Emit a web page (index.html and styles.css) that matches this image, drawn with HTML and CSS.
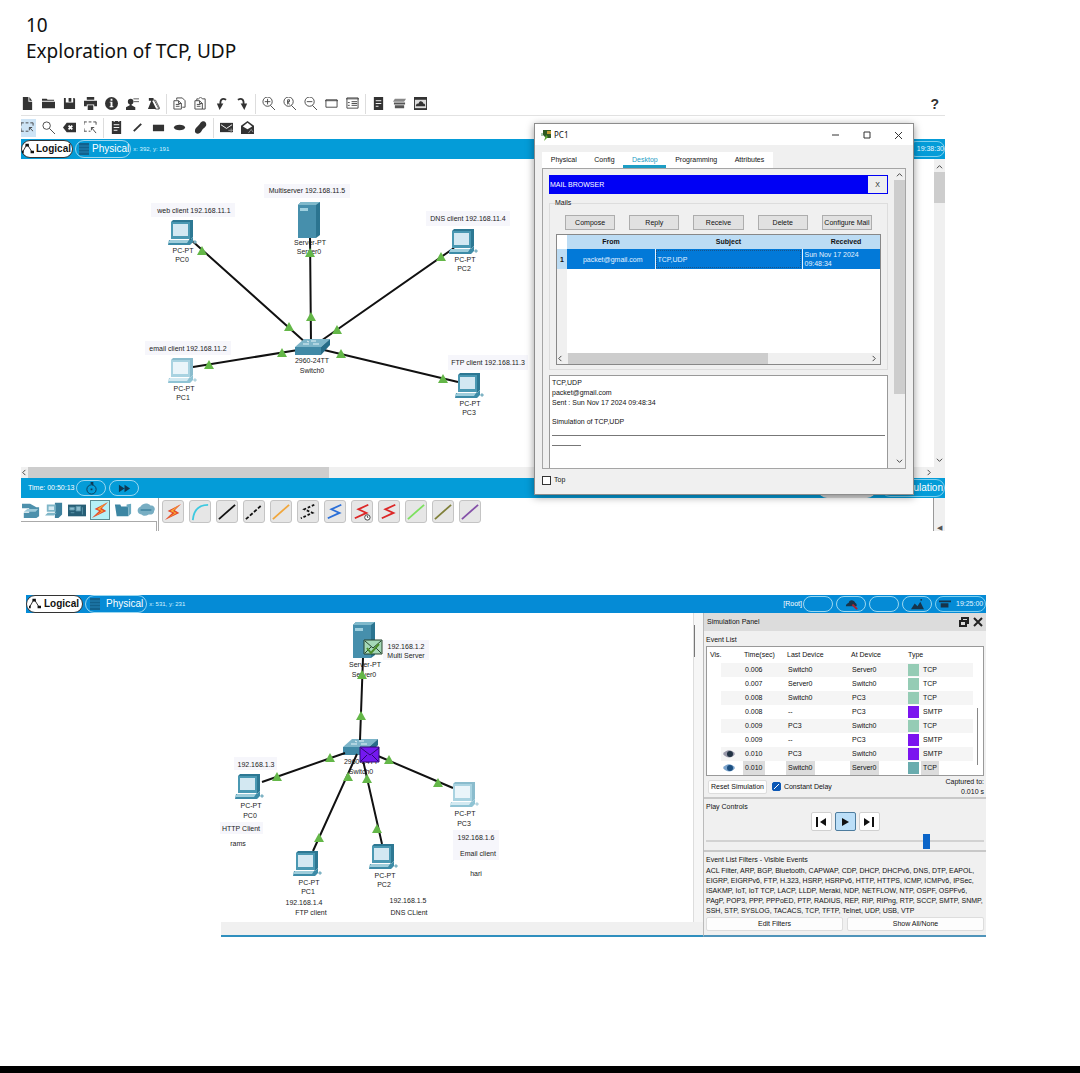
FILE: index.html
```html
<!DOCTYPE html>
<html lang="en">
<head>
<meta charset="utf-8">
<title>Exploration of TCP, UDP</title>
<link rel="stylesheet" href="styles.css">
</head>
<body>
<svg class="defs" width="0" height="0" aria-hidden="true">
  <defs>
    <symbol id="pc" viewBox="0 0 30 26">
      <path d="M3 2 5 0H25V17L22 20Z" fill="#2d7893"/>
      <path d="M3 2H22V19H3Z" fill="#4a98b2"/>
      <path d="M5 4H20V16H5Z" fill="#d3e8f2"/>
      <path d="M1 20H22L25 17V22L22 25H0Z" fill="#3c8ba7"/>
      <path d="M2 20H21L19 23H0Z" fill="#9fcddb"/>
      <path d="M26 23 28 21" stroke="#7fb3c4" stroke-width="3" fill="none"/>
    </symbol>
    <symbol id="pc-lit" viewBox="0 0 30 26">
      <path d="M3 2 5 0H25V17L22 20Z" fill="#8abccd"/>
      <path d="M3 2H22V19H3Z" fill="#a9d3e1"/>
      <path d="M5 4H20V16H5Z" fill="#eaf5fa"/>
      <path d="M1 20H22L25 17V22L22 25H0Z" fill="#8fc3d4"/>
      <path d="M2 20H21L19 23H0Z" fill="#d2e9f1"/>
      <path d="M26 23 28 21" stroke="#b3d3de" stroke-width="3" fill="none"/>
    </symbol>
    <symbol id="server" viewBox="0 0 23 36">
      <path d="M0 3 3 0H22V33L18 36Z" fill="#2b7490"/>
      <path d="M0 3H18V36H0Z" fill="#468fac"/>
      <path d="M0 3 3 0H22L18 3Z" fill="#7fb9cb"/>
      <path d="M2 6H10V9H2Z" fill="#9fd0df"/>
    </symbol>
    <symbol id="switch" viewBox="0 0 35 17">
      <path d="M0 8 9 0H35L26 8Z" fill="#7db5c9"/>
      <path d="M0 8H26V16H0Z" fill="#4089a6"/>
      <path d="M26 8 35 0V6L26 16Z" fill="#276c88"/>
      <path d="M8 5h6M16 2h5M18 5h6M12 2l2 1" stroke="#e4f3f8" stroke-width="1"/>
    </symbol>
    <symbol id="up" viewBox="0 0 10 9"><path d="M5 0 10 9H0Z" fill="#64b748"/></symbol>
    <symbol id="bolt" viewBox="0 0 20 20"><path d="M19 1 4 9l5 2-8 8 16-8-5-3Z" fill="#e5482a"/><path d="M17 2 7 9l5 2-8 6 10-6-4-2Z" fill="#f9b233"/></symbol>
    <symbol id="zig" viewBox="0 0 20 20"><path d="M17 2 6 7l9 4L2 17" fill="none" stroke="currentColor" stroke-width="2"/></symbol>
    <symbol id="slash" viewBox="0 0 20 20"><path d="M1 18 19 2" fill="none" stroke="currentColor" stroke-width="2"/></symbol>
    <symbol id="path" viewBox="0 0 14 14"><path d="M1 10 5 3h2l5 8" fill="none" stroke="currentColor"/><path d="M4 1h4v3H4ZM10 9h4v3h-4ZM0 9h2v3H0Z" fill="currentColor"/></symbol>
    <symbol id="rack" viewBox="0 0 12 12"><path d="M1 0h10v12H1Z" fill="#12618c"/><path d="M1 3h10M1 6h10M1 9h10" stroke="#2483b5"/></symbol>
  </defs>
</svg>

<header class="doc-head">
  <p>10</p>
  <h1>Exploration of TCP, UDP</h1>
</header>

<main>
<section class="app app-first" aria-label="Logical workspace">
  <div class="toolbar">
    <button class="tool" aria-label="New"><svg viewBox="0 0 14 14"><path d="M2 0h6v5h4v9H2ZM9 0l3 4H9Z"/></svg></button>
    <button class="tool" aria-label="Open"><svg viewBox="0 0 14 14"><path d="M0 2h5l1 1h7v1H0ZM0 5h14v7H0Z"/></svg></button>
    <button class="tool" aria-label="Save"><svg viewBox="0 0 14 14"><path d="M1 1h2v5h8V1h1l1 1v11H1ZM6 1h3v4H6Z"/></svg></button>
    <button class="tool" aria-label="Print"><svg viewBox="0 0 14 14"><path d="M3 0h8v3H3ZM0 4h14v6h-3V8H3v2H0ZM4 9h6v5H4Z"/></svg></button>
    <button class="tool" aria-label="Info"><svg viewBox="0 0 14 14"><circle cx="7" cy="7" r="7"/><path d="M6 2h2v2H6ZM5 5h3v5h1v1H5v-1h1V6H5Z" fill="#fff"/></svg></button>
    <button class="tool" aria-label="User"><svg viewBox="0 0 14 14"><circle cx="5" cy="5" r="3"/><path d="M4 7h2v2l4 2v3H0v-3l4-2Z"/><path d="M8 2h6M8 5h6" stroke="#555"/></svg></button>
    <button class="tool" aria-label="Wizard"><svg viewBox="0 0 14 14"><path d="M1 13 5 3l5 10ZM2 1h5v3H2Z"/><path d="M7 2l6 11H9M9 3l5 10" stroke="#555" fill="none"/></svg></button>
    <span class="sep"></span>
    <button class="tool line" aria-label="Copy"><svg viewBox="0 0 14 14"><path d="M4 3V1h6l3 3v7h-3M1 4h5l3 3v6H1ZM3 8h4M3 10h4M6 4v3h3"/></svg></button>
    <button class="tool line" aria-label="Paste"><svg viewBox="0 0 14 14"><path d="M3 4V2h2l2-2 2 2h3v11H9M1 4h5l3 3v6H1ZM3 8h4M3 10h4M6 4v3h3"/></svg></button>
    <button class="tool" aria-label="Undo"><svg viewBox="0 0 14 14"><path d="M2 7h7l-4 7Z"/><path d="M6 9c-1-7 2-8 6-6" fill="none" stroke="#333" stroke-width="2"/></svg></button>
    <button class="tool" aria-label="Redo"><svg viewBox="0 0 14 14"><path d="M5 7h7l-3 7Z"/><path d="M8 9c1-7-2-8-6-6" fill="none" stroke="#333" stroke-width="2"/></svg></button>
    <span class="sep"></span>
    <button class="tool line" aria-label="Zoom in"><svg viewBox="0 0 14 14"><circle cx="6" cy="5" r="5"/><path d="m9 9 5 5M3 5h6M6 2v6"/></svg></button>
    <button class="tool line" aria-label="Zoom reset"><svg viewBox="0 0 14 14"><circle cx="6" cy="5" r="5"/><path d="m9 9 5 5M5 8V3h2v2H5l2 3"/></svg></button>
    <button class="tool line" aria-label="Zoom out"><svg viewBox="0 0 14 14"><circle cx="6" cy="5" r="5"/><path d="m9 9 5 5M3 5h6"/></svg></button>
    <button class="tool line" aria-label="Viewport"><svg viewBox="0 0 14 14"><path d="M1 3h12v8H1ZM0 4h14"/></svg></button>
    <button class="tool line" aria-label="Workspace list"><svg viewBox="0 0 14 14"><path d="M1 1h12v11H1ZM0 2h14M2 6h2M2 9h2M6 5h6M6 7h6M6 9h6"/></svg></button>
    <span class="sep"></span>
    <button class="tool" aria-label="Palette"><svg viewBox="0 0 14 14"><path d="M2 0h10v14H2Z"/><path d="M4 4h6M4 7h6M4 10h3" stroke="#fff"/></svg></button>
    <button class="tool" aria-label="Devices"><svg viewBox="0 0 14 14"><path d="M2 2h12l-2 3H0Z" fill="#888"/><path d="M1 6h12v2H1ZM2 9h10v3H2Z" fill="#555"/></svg></button>
    <button class="tool" aria-label="Cloud"><svg viewBox="0 0 14 14"><path d="M0 0h14v14H0Z"/><path d="M1 3h12v9H1Z" fill="#ddd"/><path d="M2 10c0-3 2-3 3-3 1-4 5-2 5 0 2 0 2 1 2 3Z"/></svg></button>
    <button class="help" aria-label="Help">?</button>
  </div>
  <div class="toolbar toolbar-second">
    <button class="tool line picked" aria-label="Select"><svg viewBox="0 0 14 14"><path d="M0 5V2h3M5 2h3M10 2h3v3M0 8v3h3M5 11h3M9 7l4 4M9 10V7h3"/></svg></button>
    <button class="tool line" aria-label="Inspect"><svg viewBox="0 0 14 14"><circle cx="5" cy="5" r="4"/><path d="m8 8 6 6"/></svg></button>
    <button class="tool" aria-label="Delete"><svg viewBox="0 0 14 14"><path d="M0 7 4 2h10v10H4Z"/><path d="m6 5 4 4M10 5 6 9" stroke="#fff" stroke-width="2"/></svg></button>
    <button class="tool line" aria-label="Resize"><svg viewBox="0 0 14 14"><path d="M0 4V1h3M5 1h3M10 1h3v3M0 8v3h3M5 11h2M8 7l5 6M8 10V7h3"/></svg></button>
    <span class="sep"></span>
    <button class="tool" aria-label="Note"><svg viewBox="0 0 14 14"><path d="M2 0h2v1h1V0h4v1h1V0h2v14H2Z"/><path d="M4 4h6M4 7h6M4 10h4" stroke="#fff"/></svg></button>
    <button class="tool" aria-label="Line"><svg viewBox="0 0 14 14"><path d="M3 11 11 3" stroke="#333" stroke-width="2"/></svg></button>
    <button class="tool" aria-label="Rectangle"><svg viewBox="0 0 14 14"><path d="M1 4h12v7H1Z"/></svg></button>
    <button class="tool" aria-label="Ellipse"><svg viewBox="0 0 14 14"><ellipse cx="7" cy="7" rx="6" ry="3"/></svg></button>
    <button class="tool" aria-label="Freeform"><svg viewBox="0 0 14 14"><path d="M7 2c4-4 7 0 6 3-2 3-4 3-5 6-2 4-7 3-7 0 0-4 4-5 6-9Z"/></svg></button>
    <span class="sep"></span>
    <button class="tool" aria-label="Simple PDU"><svg viewBox="0 0 14 14"><path d="M0 2h14v10H0Z"/><path d="m1 4 6 4 6-4" stroke="#fff" fill="none"/><path d="M9 10h5M12 8v5" stroke="#999"/></svg></button>
    <button class="tool" aria-label="Complex PDU"><svg viewBox="0 0 14 14"><path d="m0 5 7-5 7 5v9H0Z"/><path d="m2 6 5-4 5 4-5 3Z" fill="#fff"/><path d="m8 13 3-4 2 3" stroke="#999" fill="none"/></svg></button>
  </div>

  <div class="bluebar">
    <button class="view-tab active"><svg viewBox="0 0 14 14"><use href="#path"/></svg>Logical</button>
    <button class="view-tab"><svg viewBox="0 0 12 12"><use href="#rack"/></svg>Physical</button>
    <span class="coords">x: 392, y: 191</span>
    <span class="clock">19:38:30</span>
  </div>

  <div class="workspace">
    <svg class="diagram" width="510" height="308" viewBox="21 159 510 308" role="img" aria-label="Star topology around Switch0">
      <g class="tag"><rect x="151" y="203" width="84" height="14"/><rect x="264" y="184" width="86" height="14"/><rect x="426" y="211" width="84" height="15"/><rect x="145" y="341" width="86" height="14"/><rect x="448" y="355" width="80" height="15"/></g>
      <g class="names">
        <text x="194" y="213">web client 192.168.11.1</text>
        <text x="307" y="193">Multiserver 192.168.11.5</text>
        <text x="468" y="221">DNS client 192.168.11.4</text>
        <text x="188" y="351">email client 192.168.11.2</text>
        <text x="488" y="365">FTP client 192.168.11.3</text>
        <text x="183" y="253">PC-PT</text><text x="182" y="262">PC0</text>
        <text x="310" y="245">Server-PT</text><text x="309" y="254">Server0</text>
        <text x="465" y="262">PC-PT</text><text x="464" y="271">PC2</text>
        <text x="184" y="391">PC-PT</text><text x="183" y="400">PC1</text>
        <text x="312" y="363">2960-24TT</text><text x="312" y="373">Switch0</text>
        <text x="470" y="406">PC-PT</text><text x="469" y="415">PC3</text>
      </g>
      <g class="cable"><path d="M190 239 306 343M310 236 311 343M454 248 318 343M193 367 298 350M458 382 324 350"/></g>
      <use href="#pc" x="168" y="220" width="30" height="26"/>
      <use href="#server" x="298" y="202" width="23" height="36"/>
      <use href="#pc" x="449" y="229" width="30" height="26"/>
      <use href="#pc-lit" x="168" y="358" width="30" height="26"/>
      <use href="#pc" x="455" y="373" width="30" height="26"/>
      <use href="#switch" x="295" y="339" width="35" height="17"/>
      <g>
        <use href="#up" x="197" y="246" width="10" height="9"/><use href="#up" x="284" y="322" width="10" height="9"/>
        <use href="#up" x="305" y="248" width="10" height="9"/><use href="#up" x="306" y="312" width="10" height="9"/>
        <use href="#up" x="436" y="252" width="10" height="9"/><use href="#up" x="332" y="325" width="10" height="9"/>
        <use href="#up" x="204" y="360" width="10" height="9"/><use href="#up" x="277" y="348" width="10" height="9"/>
        <use href="#up" x="336" y="349" width="10" height="9"/><use href="#up" x="438" y="374" width="10" height="9"/>
      </g>
    </svg>
    <div class="vscroll"><svg viewBox="0 0 8 8"><path d="m1 6 3-3 3 3"/></svg><span class="thumb"></span><svg class="end" viewBox="0 0 8 8"><path d="m1 2 3 3 3-3"/></svg></div>
  </div>
  <div class="hscroll"><svg viewBox="0 0 8 8"><path d="M5 1 2 4l3 3"/></svg><span class="thumb"></span><svg class="end" viewBox="0 0 8 8"><path d="m3 1 3 3-3 3"/></svg></div>

  <div class="bluebar timebar">
    <span>Time: 00:50:13</span>
    <button class="pill" aria-label="Power cycle"><svg viewBox="0 0 14 14"><circle cx="7" cy="8" r="5" fill="none" stroke="#0d3a55"/><path d="M6 0h3v4L6 2ZM6 7h2v2H6Z" fill="#0d3a55"/></svg></button>
    <button class="pill" aria-label="Fast forward"><svg viewBox="0 0 14 14"><path d="m1 3 6 4-6 4ZM7 3l6 4-6 4Z" fill="#0d3a55"/></svg></button>
    <button class="mode-real" aria-label="Realtime"></button>
    <button class="mode-sim">Simulation</button>
  </div>

  <div class="palette">
    <div class="groups">
      <div class="group-row">
        <button class="group" aria-label="Network devices"><svg viewBox="0 0 20 20"><path d="M0 3h9l7 4h3v10l-3 2H2v-6h6V8H0Z" fill="#4d90ac"/><path d="M2 12 6 9h12l-3 3Z" fill="#9cc9d9"/></svg></button>
        <button class="group" aria-label="End devices"><svg viewBox="0 0 20 20"><path d="M11 2h8v13l-4 4h-4Z" fill="#3d809d"/><path d="M2 4h10v8H2ZM0 16l3-3h10l-3 3Z" fill="#7fb6c8"/><path d="M4 6h6v4H4Z" fill="#d6eaf2"/></svg></button>
        <button class="group" aria-label="Components"><svg viewBox="0 0 20 20"><path d="M0 4h20v13H0Z" fill="#285f76"/><path d="M2 7h5v3H2ZM9 6h5v5H9ZM3 13h4M16 7v8" fill="#8dbccd" stroke="#5f98ad"/></svg></button>
        <button class="group chosen" aria-label="Connections"><svg viewBox="0 0 20 20"><use href="#bolt"/></svg></button>
        <button class="group" aria-label="Miscellaneous"><svg viewBox="0 0 20 20"><path d="M1 4h6l1 2h8v11H3Z" fill="#3d86a3"/><path d="m14 4 5-1v11l-3 3V7h-2Z" fill="#69a9c0"/></svg></button>
        <button class="group" aria-label="Multiuser"><svg viewBox="0 0 20 20"><path d="M4 6c3-4 8-4 11-1 4-1 6 4 4 6 0 4-4 4-6 4-3 2-6 2-8 0-5 0-6-7-1-9Z" fill="#78aec3"/><path d="M4 10h12" stroke="#4a8ba5" stroke-width="2"/></svg></button>
      </div>
      <div class="subgroup"></div>
    </div>
    <div class="links">
      <button class="link" aria-label="Automatic"><svg viewBox="0 0 20 20"><use href="#bolt"/></svg></button>
      <button class="link cyan" aria-label="Console"><svg viewBox="0 0 20 20"><path d="M2 19C3 8 8 2 19 2" fill="none" stroke="currentColor" stroke-width="2"/></svg></button>
      <button class="link black" aria-label="Straight-through"><svg viewBox="0 0 20 20"><use href="#slash"/></svg></button>
      <button class="link black" aria-label="Cross-over"><svg viewBox="0 0 20 20"><path d="M1 18 19 2" stroke="currentColor" stroke-width="2" stroke-dasharray="4 2"/></svg></button>
      <button class="link orange" aria-label="Fiber"><svg viewBox="0 0 20 20"><use href="#slash"/></svg></button>
      <button class="link black" aria-label="Phone"><svg viewBox="0 0 20 20"><path d="M17 2 6 7l9 4L2 17" fill="none" stroke="currentColor" stroke-width="2" stroke-dasharray="3 2"/></svg></button>
      <button class="link blue" aria-label="Coaxial"><svg viewBox="0 0 20 20"><use href="#zig"/></svg></button>
      <button class="link red" aria-label="Serial DCE"><svg viewBox="0 0 20 20"><use href="#zig"/><circle cx="16" cy="16" r="3" fill="#fff" stroke="#333"/><path d="M16 14v2h1" stroke="#333" fill="none"/></svg></button>
      <button class="link red" aria-label="Serial DTE"><svg viewBox="0 0 20 20"><use href="#zig"/></svg></button>
      <button class="link green" aria-label="Octal"><svg viewBox="0 0 20 20"><use href="#slash"/></svg></button>
      <button class="link olive" aria-label="Custom"><svg viewBox="0 0 20 20"><use href="#slash"/></svg></button>
      <button class="link violet" aria-label="USB"><svg viewBox="0 0 20 20"><use href="#slash"/></svg></button>
    </div>
    <div class="collapse">◀</div>
  </div>

  <div class="window" role="dialog" aria-labelledby="win-title">
    <div class="titlebar">
      <svg width="11" height="12" viewBox="0 0 11 12"><path d="M2 1h8v8H5l-3-3Z" fill="#2d5a22"/><path d="M6 2h4v3H6Z" fill="#c29a30"/><path d="M5 6 3 12l4-4Z" fill="#59a42f"/><path d="M0 4h2v3H0Z" fill="#a8c8b0"/></svg>
      <span id="win-title">PC1</span>
      <div class="controls">
        <button aria-label="Minimize"><svg viewBox="0 0 10 10"><path d="M1 5h7"/></svg></button>
        <button aria-label="Maximize"><svg viewBox="0 0 10 10"><path d="M2 2h6v6H2Z"/></svg></button>
        <button aria-label="Close"><svg viewBox="0 0 10 10"><path d="m2 2 7 7M9 2 2 9"/></svg></button>
      </div>
    </div>
    <nav class="tabs">
      <button>Physical</button><button>Config</button><button class="on">Desktop</button><button>Programming</button><button>Attributes</button>
    </nav>
    <div class="pane">
      <div class="pane-main">
        <div class="mail-head"><span>MAIL BROWSER</span><button>X</button></div>
        <fieldset class="mails">
          <legend>Mails</legend>
          <div class="mail-actions"><button>Compose</button><button>Reply</button><button>Receive</button><button>Delete</button><button>Configure Mail</button></div>
          <div class="mail-list">
            <table>
              <colgroup><col class="c-no"><col class="c-from"><col><col class="c-rec"></colgroup>
              <thead><tr><td></td><th>From</th><th>Subject</th><th class="rec">Received</th></tr></thead>
              <tbody><tr><th>1</th><td class="mid">packet@gmail.com</td><td class="focus">TCP,UDP</td><td>Sun Nov 17 2024 09:48:34</td></tr></tbody>
            </table>
            <div class="list-space"></div>
            <div class="hscroll inner"><svg viewBox="0 0 8 8"><path d="M5 1 2 4l3 3"/></svg><span class="thumb"></span><svg class="end" viewBox="0 0 8 8"><path d="m3 1 3 3-3 3"/></svg></div>
          </div>
        </fieldset>
        <div class="message">
          <p>TCP,UDP<br>packet@gmail.com<br>Sent : Sun Nov 17 2024 09:48:34</p>
          <p>Simulation of TCP,UDP</p>
          <hr><hr class="short">
        </div>
      </div>
      <div class="vscroll pane-scroll"><svg viewBox="0 0 8 8"><path d="m1 6 3-3 3 3"/></svg><span class="thumb"></span><svg class="end" viewBox="0 0 8 8"><path d="m1 2 3 3 3-3"/></svg></div>
    </div>
    <label class="check"><input type="checkbox">Top</label>
  </div>
</section>

<section class="app app-second" aria-label="Simulation workspace">
  <div class="bluebar deep">
    <button class="view-tab active"><svg viewBox="0 0 14 14"><use href="#path"/></svg>Logical</button>
    <button class="view-tab"><svg viewBox="0 0 12 12"><use href="#rack"/></svg>Physical</button>
    <span class="coords">x: 531, y: 231</span>
    <span class="root">[Root]</span>
    <button class="pill" aria-label="Back"></button>
    <button class="pill" aria-label="New cluster"><svg viewBox="0 0 14 14"><path d="M1 9c0-3 2-3 3-4 1-4 6-3 7 0 2 1 2 4 1 4Z" fill="#17344a"/><path d="M8 7l5 5" stroke="#a23" stroke-width="2"/></svg></button>
    <button class="pill" aria-label="Move object"></button>
    <button class="pill" aria-label="Background"><svg viewBox="0 0 14 14"><path d="m0 12 4-6 3 3 3-5 4 8Z" fill="#17344a"/><circle cx="11" cy="2" r="1" fill="#17344a"/></svg></button>
    <span class="clock wide"><svg viewBox="0 0 14 14"><path d="M0 3h14v2H0ZM2 6h9v5H2Z" fill="#17344a"/></svg>19:25:00</span>
  </div>
  <div class="split">
    <div class="canvas">
      <svg class="diagram" width="640" height="311" viewBox="26 613 640 311" role="img" aria-label="Star topology with packets in transit">
        <g class="tag"><rect x="383" y="640" width="46" height="20"/><rect x="234" y="757" width="43" height="13"/><rect x="453" y="830" width="46" height="30"/><rect x="220" y="822" width="43" height="12"/></g>
        <g class="names">
          <text x="406" y="649">192.168.1.2</text><text x="406" y="658">Multi Server</text>
          <text x="365" y="667">Server-PT</text><text x="364" y="677">Server0</text>
          <text x="361" y="764">2960-24TT</text><text x="361" y="774">Switch0</text>
          <text x="256" y="767">192.168.1.3</text>
          <text x="251" y="808">PC-PT</text><text x="250" y="818">PC0</text><text x="241" y="831">HTTP Client</text><text x="238" y="846">rams</text>
          <text x="309" y="885">PC-PT</text><text x="308" y="894">PC1</text><text x="304" y="905">192.168.1.4</text><text x="311" y="915">FTP client</text>
          <text x="385" y="878">PC-PT</text><text x="384" y="887">PC2</text><text x="408" y="903">192.168.1.5</text><text x="409" y="915">DNS CLient</text>
          <text x="465" y="816">PC-PT</text><text x="464" y="826">PC3</text><text x="476" y="840">192.168.1.6</text><text x="478" y="856">Email client</text><text x="476" y="876">hari</text>
        </g>
        <use href="#server" x="353" y="622" width="23" height="36"/>
        <use href="#switch" x="343" y="739" width="35" height="17"/>
        <g class="cable"><path d="M363 658 360 740M345 753 262 782M357 754 313 851M362 756 382 844M378 756 453 788"/></g>
        <use href="#pc" x="235" y="774" width="30" height="26"/>
        <use href="#pc" x="293" y="851" width="30" height="26"/>
        <use href="#pc" x="369" y="844" width="30" height="26"/>
        <use href="#pc-lit" x="450" y="782" width="30" height="26"/>
        <path d="M364 640h18v14h-18Z" fill="#a5d9b8" stroke="#27432f"/><path d="m365 641 8 7 8-7M365 653l6-6M381 653l-6-6" fill="none" stroke="#27432f"/><path d="m367 648 4 5 8-9" fill="none" stroke="#4d8f2c" stroke-width="2"/>
        <path d="M360 747h19v15h-19Z" fill="#7418f0" stroke="#2d0a70"/><path d="m361 748 9 7 9-7M361 761l6-6M378 761l-6-6" fill="none" stroke="#2d0a70"/>
        <g>
          <use href="#up" x="357" y="670" width="10" height="9"/><use href="#up" x="356" y="711" width="10" height="9"/>
          <use href="#up" x="325" y="753" width="10" height="9"/><use href="#up" x="272" y="772" width="10" height="9"/>
          <use href="#up" x="343" y="772" width="10" height="9"/><use href="#up" x="314" y="833" width="10" height="9"/>
          <use href="#up" x="362" y="774" width="10" height="9"/><use href="#up" x="372" y="824" width="10" height="9"/>
          <use href="#up" x="384" y="755" width="10" height="9"/><use href="#up" x="433" y="778" width="10" height="9"/>
        </g>
      </svg>
      <div class="canvas-scroll"></div>
    </div>
    <aside class="sim">
      <div class="sim-title"><span>Simulation Panel</span>
        <button aria-label="Float"><svg viewBox="0 0 10 10"><path d="M3 3V1h6v5H7M1 4h6v5H1Z"/></svg></button>
        <button aria-label="Close"><svg viewBox="0 0 10 10"><path d="m1 1 8 8M9 1 1 9"/></svg></button>
      </div>
      <h2>Event List</h2>
      <div class="events">
        <table>
          <colgroup><col class="e-vis"><col class="e-time"><col class="e-last"><col class="e-at"><col></colgroup>
          <thead><tr><th>Vis.</th><th>Time(sec)</th><th>Last Device</th><th>At Device</th><th>Type</th></tr></thead>
          <tbody>
            <tr><td></td><td>0.006</td><td>Switch0</td><td>Server0</td><td><i></i>TCP</td></tr>
            <tr><td></td><td>0.007</td><td>Server0</td><td>Switch0</td><td><i></i>TCP</td></tr>
            <tr><td></td><td>0.008</td><td>Switch0</td><td>PC3</td><td><i></i>TCP</td></tr>
            <tr><td></td><td>0.008</td><td>--</td><td>PC3</td><td><i class="smtp"></i>SMTP</td></tr>
            <tr><td></td><td>0.009</td><td>PC3</td><td>Switch0</td><td><i></i>TCP</td></tr>
            <tr><td></td><td>0.009</td><td>--</td><td>PC3</td><td><i class="smtp"></i>SMTP</td></tr>
            <tr><td class="eye"><svg viewBox="0 0 12 8"><path d="M0 4c3-5 9-5 12 0-3 5-9 4-12 0Z" fill="#99a"/><circle cx="7" cy="4" r="3" fill="#234"/></svg></td><td>0.010</td><td>PC3</td><td>Switch0</td><td><i class="smtp"></i>SMTP</td></tr>
            <tr class="current"><td class="eye"><svg viewBox="0 0 12 8"><path d="M0 4c3-5 9-5 12 0-3 5-9 4-12 0Z" fill="#7aa3cc"/><circle cx="7" cy="4" r="3" fill="#1c4f80"/></svg></td><td><b>0.010</b></td><td><b>Switch0</b></td><td><b>Server0</b></td><td><i></i><b>TCP</b></td></tr>
          </tbody>
        </table>
        <div class="events-scroll"></div>
      </div>
      <div class="sim-row"><button class="plain">Reset Simulation</button><label class="check blue-check"><input type="checkbox" checked>Constant Delay</label><p>Captured to:<br>0.010 s</p></div>
      <div class="play">
        <h2>Play Controls</h2>
        <div class="play-buttons">
          <button aria-label="Back"><svg viewBox="0 0 12 12"><path d="M1 1h2v10H1ZM11 2v8L5 6Z"/></svg></button>
          <button class="on" aria-label="Play"><svg viewBox="0 0 12 12"><path d="M3 2v8l7-4Z"/></svg></button>
          <button aria-label="Forward"><svg viewBox="0 0 12 12"><path d="M9 1h2v10H9ZM1 2v8l6-4Z"/></svg></button>
        </div>
        <input type="range" min="0" max="100" value="80" aria-label="Play speed">
      </div>
      <div class="filters">
        <h2>Event List Filters - Visible Events</h2>
        <p>ACL Filter, ARP, BGP, Bluetooth, CAPWAP, CDP, DHCP, DHCPv6, DNS, DTP, EAPOL,<br>EIGRP, EIGRPv6, FTP, H.323, HSRP, HSRPv6, HTTP, HTTPS, ICMP, ICMPv6, IPSec,<br>ISAKMP, IoT, IoT TCP, LACP, LLDP, Meraki, NDP, NETFLOW, NTP, OSPF, OSPFv6,<br>PAgP, POP3, PPP, PPPoED, PTP, RADIUS, REP, RIP, RIPng, RTP, SCCP, SMTP, SNMP,<br>SSH, STP, SYSLOG, TACACS, TCP, TFTP, Telnet, UDP, USB, VTP</p>
        <div class="filter-buttons"><button class="plain">Edit Filters</button><button class="plain">Show All/None</button></div>
      </div>
    </aside>
  </div>
</section>
</main>
<footer></footer>
</body>
</html>
```
FILE: styles.css
```css
* { box-sizing: border-box; }
body { margin: 0; min-height: 100vh; display: flex; flex-direction: column; background: #fff; color: #111; font-family: "Liberation Sans", Arial, sans-serif; font-size: 7px; line-height: 10px; }
p, h1, h2 { margin: 0; font-weight: 400; font-size: inherit; }
button { margin: 0; padding: 0; border: 0; background: none; font: inherit; color: inherit; white-space: nowrap; }
svg { display: block; flex: none; }
.defs { position: absolute; }
table { border-collapse: collapse; table-layout: fixed; width: 100%; }
th, td { padding: 0; }

.doc-head { padding: 12px 26px 28px; font-family: "Noto Sans", "Open Sans", sans-serif; font-size: 19px; line-height: 26px; }
footer { margin-top: auto; height: 7px; background: #000; }

.app { position: relative; }
.app-first { margin: 0 135px 0 21px; }
.app-second { margin: 64px 94px 0 26px; }

/* toolbars */
.toolbar { display: flex; align-items: center; gap: 8px; height: 24px; border-bottom: 1px solid #e2e2e2; }
.toolbar-second { height: 23px; border-bottom: 0; }
.tool { width: 13px; height: 18px; display: grid; place-items: center; flex: none; }
.tool svg { width: 13px; height: 13px; fill: #333; }
.tool.line svg { fill: none; stroke: #444; stroke-width: 1; }
.tool.picked { background: #cde4f6; box-shadow: 2px 0 #cde4f6; }
.sep { width: 1px; height: 20px; margin: 0 -2px; background: #ddd; }
.help { margin-left: auto; padding-right: 6px; font-size: 14px; font-weight: 700; color: #333; }

/* blue bars */
.bluebar { display: flex; align-items: center; height: 20px; background: #049cd8; color: #fff; }
.bluebar.deep { height: 18px; background: #058bd6; }
.view-tab { display: flex; align-items: center; gap: 2px; height: 18px; padding: 0 1px 0 2px; margin-right: 2px; border: 1px solid #9ad7f0; border-radius: 9px; font-size: 10px; }
.view-tab svg { width: 12px; height: 12px; }
.view-tab.active { background: #fff; color: #111; border-color: #333; font-weight: 700; padding-left: 0; }
.deep .view-tab { padding: 0 3px; gap: 5px; }
.deep .view-tab.active { padding-left: 2px; gap: 3px; }
.coords { font-size: 6px; color: #d9f3ff; }
.clock { margin-left: auto; height: 16px; display: flex; align-items: center; border: 1px solid #7fd0ef; border-radius: 8px; padding-left: 8px; color: #e6f7ff; }
.clock.wide { width: 51px; margin: 0; gap: 5px; padding-left: 3px; }
.clock svg { width: 12px; height: 12px; }
.pill { width: 30px; height: 16px; display: grid; place-items: center; border: 1px solid #9ad7f0; border-radius: 8px; flex: none; margin-right: 3px; }
.pill svg { width: 13px; height: 13px; }
.root { margin-left: auto; padding-right: 1px; }
.timebar { padding-left: 7px; }
.timebar span { padding-right: 2px; }
.mode-real { margin-left: auto; width: 58px; height: 18px; border-radius: 9px; background: #ddd; align-self: flex-end; margin-right: 5px; }
.mode-sim { height: 18px; padding: 0 1px 0 14px; border: 1px solid #7fd0ef; border-radius: 9px; font-size: 10px; }

/* scrollbars */
.vscroll { width: 11px; flex: none; background: #f0f0f0; display: flex; flex-direction: column; align-items: center; }
.hscroll { height: 11px; background: #f0f0f0; display: flex; align-items: center; }
.vscroll svg, .hscroll svg { width: 7px; height: 7px; fill: none; stroke: #333; stroke-width: 1; }
.thumb { background: #cdcdcd; }
.vscroll .thumb { width: 100%; height: 31px; margin-top: 2px; }
.hscroll .thumb { height: 100%; width: 301px; }
.vscroll .end { margin-top: auto; margin-bottom: 3px; }
.hscroll .end { margin-left: auto; margin-right: 3px; }
.app-first > .hscroll .end { margin-right: 13px; }

/* topology canvas */
.workspace { display: flex; justify-content: space-between; }
.workspace .vscroll { padding-top: 4px; }
.diagram .names { font-size: 7px; text-anchor: middle; fill: #222; }
.diagram .tag { fill: #f6f6fb; }
.diagram .cable { stroke: #111; stroke-width: 2; fill: none; }

/* device palette */
.palette { display: flex; height: 33px; }
.groups { width: 138px; border-right: 1px solid #aaa; }
.group-row { display: flex; gap: 3px; height: 23px; align-items: center; }
.group { width: 20px; height: 20px; display: grid; place-items: center; flex: none; }
.group svg { width: 18px; height: 18px; }
.group.chosen { background: #b6f1f6; border: 1px solid #5c8d92; }
.subgroup { height: 10px; margin-right: 1px; border-top: 1px solid #aaa; border-right: 1px solid #aaa; }
.links { display: flex; gap: 5px; padding: 2px 0 0 3px; flex: 1; }
.link { width: 22px; height: 23px; display: grid; place-items: center; border: 1px solid #c4c4c4; border-radius: 3px; background: #e6e6e6; }
.link svg { width: 18px; height: 18px; }
.cyan { color: #3ec9e0; } .black { color: #111; } .orange { color: #f0a63c; } .blue { color: #2b6fd8; } .red { color: #dc2626; }
.green { color: #7ce05e; } .olive { color: #80803a; } .violet { color: #8450a8; }
.collapse { width: 12px; border-left: 1px solid #999; background: #f0f0f0; color: #555; display: flex; align-items: flex-end; justify-content: center; line-height: 7px; }

/* floating device window */
.window { position: absolute; top: 31px; right: 31px; width: 380px; padding-bottom: 8px; background: #f0f0f0; border: 1px solid #8d8d8d; box-shadow: 0 2px 8px rgba(0, 0, 0, .4); }
.titlebar { display: flex; align-items: center; gap: 2px; height: 21px; padding: 0 10px 0 6px; background: #fff; font-family: "Noto Sans", sans-serif; font-size: 8px; }
.controls { margin-left: auto; display: flex; gap: 21px; }
.controls button { width: 10px; height: 10px; }
.controls svg { width: 10px; height: 10px; fill: none; stroke: #333; }
.tabs { display: flex; width: 231px; margin: 7px 0 0 7px; height: 16px; background: #fff; }
.tabs button { padding: 0 8px; border-bottom: 3px solid transparent; height: 16px; line-height: 15px; flex: auto; }
.tabs .on { color: #1d9dc4; border-color: #1d9dc4; }
.pane { display: flex; height: 301px; margin: 0 7px; border: 1px solid #a5a5a5; overflow: hidden; }
.pane-main { flex: 1; display: flex; flex-direction: column; padding: 6px 6px 0 6px; }
.pane-scroll { padding-top: 2px; }
.pane-scroll .thumb { height: 214px; }
.mail-head { display: flex; justify-content: space-between; align-items: center; height: 19px; padding: 1px; background: #0000f5; color: #fff; flex: none; }
.mail-head button { width: 19px; height: 17px; background: #eee; color: #222; }
.mails { margin: 4px 0 5px; padding: 7px 6px 4px; border: 1px solid #ddd; min-width: 0; }
.mails legend { padding: 0; margin-left: -1px; }
.mail-actions { display: flex; gap: 14px; padding: 0 9px 4px; }
.mail-actions button { flex: 1 1 0; height: 15px; border: 1px solid #adadad; background: #e1e1e1; }
.mail-list { border: 1px solid #888; background: #fff; }
.mail-list .c-no { width: 10px; } .mail-list .c-from { width: 88px; } .mail-list .c-rec { width: 78px; }
.mail-list thead { height: 14px; }
.mail-list th { background: #bcdcf4; }
.mail-list .rec { padding-left: 10px; }
.mail-list tbody { height: 20px; line-height: 9px; }
.mail-list tbody td { background: #0279d8; color: #e2f2ff; border-left: 1px solid #e2f2ff; padding-left: 2px; }
.mail-list tbody .mid { text-align: center; border: 0; padding: 0 0 0 4px; }
.mail-list tbody .focus { outline: 1px dotted #17548a; outline-offset: -2px; }
.list-space { height: 84px; border-left: 10px solid #f0f0f0; }
.inner .thumb { width: 200px; margin-left: 4px; }
.message { flex: 1; padding: 2px; border: 1px solid #999; border-bottom: 0; background: #fff; display: flex; flex-direction: column; }
.message p + p { margin-top: 9px; }
.message hr { width: 100%; margin: 8px 0 0; border: 0; border-top: 1px solid #777; }
.message hr.short { width: 29px; margin-top: 9px; }
.check { display: flex; align-items: center; gap: 3px; }
.check input { appearance: none; margin: 0; width: 9px; height: 9px; border: 1px solid #333; background: #fff; }
.window .check { margin: 6px 0 1px 7px; }

/* simulation workspace */
.split { display: flex; }
.canvas { flex: 1; display: flex; justify-content: space-between; position: relative; padding-bottom: 13px; }
.canvas::after { content: ""; position: absolute; left: 195px; right: 0; bottom: 0; height: 13px; background: #f0f0f0; border-bottom: 2px solid #2f8fbe; }
.canvas-scroll { width: 10px; border-left: 1px solid #ddd; background: linear-gradient(#777, #777) 0 12px / 1px 32px no-repeat, #f6f6f6; }
.sim { width: 283px; display: flex; flex-direction: column; background: #f0f0f0; border-left: 1px solid #bbb; border-bottom: 2px solid #4f94ba; }
.sim-title { display: flex; align-items: center; gap: 4px; height: 18px; padding: 0 3px; background: #dcdcdc; }
.sim-title span { flex: 1; }
.sim-title button, .sim-title svg { width: 10px; height: 10px; }
.sim-title svg { fill: none; stroke: #222; stroke-width: 2; }
.sim h2 { padding-left: 2px; }
.sim-title + h2 { padding-top: 4px; }
.events { display: flex; margin: 1px 2px 0; border: 1px solid #999; background: #fff; }
.events table { flex: 1; line-height: 14px; }
.events th { font-weight: 400; text-align: left; padding-left: 3px; height: 16px; }
.events th + th { padding-left: 1px; }
.events td { padding-left: 2px; height: 14px; }
.events tbody tr:nth-child(odd) { background: linear-gradient(90deg, #fff 14px, #f5f5f5 14px); }
.e-vis { width: 36px; } .e-time { width: 43px; } .e-last { width: 64px; } .e-at { width: 57px; }
.events td i { display: inline-block; width: 11px; height: 12px; margin: 0 4px 0 -1px; background: #95ccb5; vertical-align: middle; }
.events td i.smtp { background: #7b14ef; }
.current b { font-weight: 400; display: inline-block; margin-left: -2px; padding: 0 2px; background: #dcdcdc; }
.events .current td i { background: #6aacae; }
.events .eye { padding-left: 16px; }
.eye svg { width: 12px; height: 8px; }
.events-scroll { width: 10px; background: linear-gradient(#888, #888) 4px 61px / 1px 57px no-repeat; }
.sim-row { display: flex; align-items: center; gap: 5px; height: 23px; padding: 0 2px 0 4px; border-bottom: 2px solid #c8c8c8; }
.sim-row p { margin-left: auto; text-align: right; }
.plain { height: 14px; padding: 0 2px; border: 1px solid #ddd; border-radius: 2px; background: #fdfdfd; }
.blue-check input { border: 1px solid #0b57b5; border-radius: 2px; background: linear-gradient(135deg, transparent 45%, #fff 45% 60%, transparent 60%) 1px 1px / 5px 5px no-repeat #0b57b5; }
.play { height: 53px; padding-top: 3px; border-bottom: 2px solid #c8c8c8; display: flex; flex-direction: column; }
.play-buttons { display: flex; justify-content: center; gap: 3px; }
.play-buttons button { width: 21px; height: 19px; display: grid; place-items: center; border: 1px solid #d0d0d0; border-radius: 2px; background: #fff; }
.play-buttons .on { background: #bcdff8; border-color: #4d7c9e; }
.play-buttons svg { width: 12px; height: 12px; fill: #111; }
.play input { appearance: none; margin: 2px 2px 0; height: 16px; background: linear-gradient(#d2d2d2, #d2d2d2) 0 7px / 100% 2px no-repeat; }
.play input::-webkit-slider-thumb { appearance: none; width: 7px; height: 15px; background: #0a64c8; }
.filters { padding: 3px 2px 2px 0; }
.filters p { padding: 1px 0 0 2px; white-space: nowrap; }
.filter-buttons { display: flex; gap: 4px; margin-top: 1px; padding-left: 2px; }
.filter-buttons .plain { flex: 1; }
```
